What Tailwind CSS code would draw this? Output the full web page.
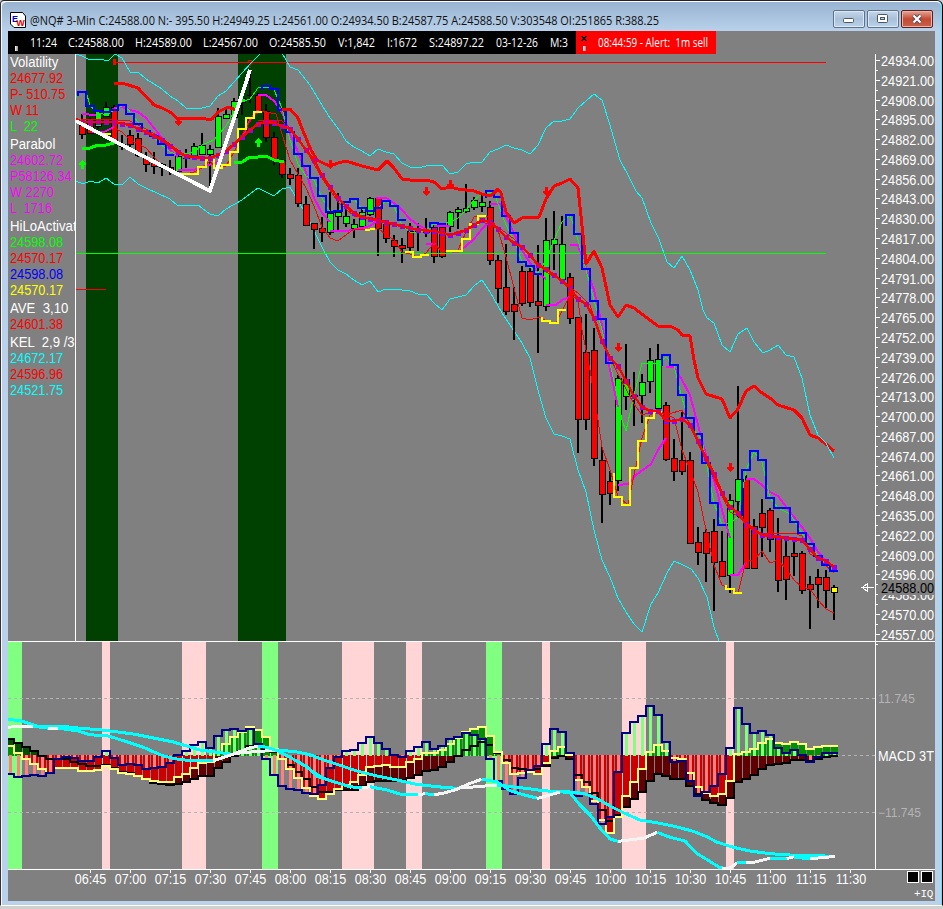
<!DOCTYPE html>
<html lang="en">
<head>
<meta charset="utf-8">
<title>@NQ# 3-Min</title>
<script src="https://cdn.jsdelivr.net/npm/@tailwindcss/browser@4"></script>
</head>
<body class="w-[943px] h-[909px] overflow-hidden bg-[#cfcfcf] font-['Liberation_Sans',Arial,sans-serif]">
<div class="flex flex-col w-[943px] h-[906px] border-t border-[#24202a] rounded-tr-[6px] rounded-tl-[4px] bg-[#b9d1ea] border-r border-r-black border-l border-l-[#3a3036] border-b border-b-white shadow-[inset_-1px_0_0_#5fe0f5,inset_1px_1px_0_#f4f8fc]">
  <header class="flex items-center h-[30px] shrink-0 mx-px pl-[8px] pr-[8px] bg-linear-to-b from-[#99b4d1] to-[#b9d1ea] border-t border-white rounded-t-[5px]">
    <svg class="shrink-0 mt-[6px]" width="16" height="16" viewBox="0 0 16 16">
      <path d="M.5 .5H12.5L15.5 4V15.5H4L.5 12Z" fill="#fff" stroke="#000"/>
      <text x="2" y="9.5" font-family="Liberation Sans" font-size="9" font-weight="bold" fill="#0000e0">E</text>
      <text x="6.2" y="13.5" font-family="Liberation Sans" font-size="9" font-weight="bold" fill="#e00000">W</text>
    </svg>
    <div class="w-[700px] ml-[4px] mt-[6px] shrink-0"><span data-w="629" class="inline-block whitespace-pre origin-left text-[12px] leading-[16px] text-[#111] font-['Open_Sans','Noto_Sans',sans-serif]">@NQ# 3-Min C:24588.00 N:- 395.50 H:24949.25 L:24561.00 O:24934.50 B:24587.75 A:24588.50 V:303548 OI:251865 R:388.25</span></div>
    <div class="flex gap-[2px] ml-auto mt-[4px]">
      <div class="flex items-center justify-center w-[32px] h-[18px] rounded-[2px] border border-[#5f7388] bg-linear-to-b from-[#c5d7ea] via-[#a9c0d9] to-[#b9d2ea] shadow-[inset_0_0_0_1px_#dce9f5]"><svg width="12" height="10"><rect x=".5" y="4.5" width="10" height="4" rx="1" fill="#fff" stroke="#4b5668"/></svg></div>
      <div class="flex items-center justify-center w-[32px] h-[18px] rounded-[2px] border border-[#5f7388] bg-linear-to-b from-[#c5d7ea] via-[#a9c0d9] to-[#b9d2ea] shadow-[inset_0_0_0_1px_#dce9f5]"><svg width="12" height="10"><rect x=".5" y=".5" width="10" height="8" rx="1" fill="#fff" stroke="#4b5668"/><rect x="3.5" y="3.5" width="4" height="2" fill="#b9d1ea" stroke="#4b5668"/></svg></div>
      <div class="flex items-center justify-center w-[32px] h-[18px] rounded-[2px] border border-[#5c1f1c] bg-linear-to-b from-[#e3a497] via-[#c4492f] to-[#c9604c] shadow-[inset_0_0_0_1px_#e9b3a8]"><svg width="12" height="10" viewBox="0 0 12 10"><path d="M2.5 1.5L9.5 8.5M9.5 1.5L2.5 8.5" stroke="#4b4a58" stroke-width="4"/><path d="M2.5 1.5L9.5 8.5M9.5 1.5L2.5 8.5" stroke="#fff" stroke-width="2.2"/></svg></div>
    </div>
  </header>

  <main class="flex flex-col w-[927px] h-[870px] ml-[7px] bg-[#808080]">
    <div class="flex h-[23px] shrink-0 text-white text-[12px] leading-[23px] font-['Open_Sans','Noto_Sans',sans-serif]">
      <div id="quote" class="relative flex w-[568px] bg-black pl-[22px]"><i class="absolute left-[7px] top-[15px] w-[3px] h-[5px] bg-linear-to-r from-white to-[#888]"></i></div>
      <div class="relative w-[140px] bg-[#ff0000] pl-[22px]"><svg class="absolute left-[5px] top-[5px]" width="6" height="5" shape-rendering="crispEdges"><path d="M0 0L6 5M6 0L0 5" stroke="#000" stroke-width="1.6"/></svg><i class="absolute left-[7px] top-[15px] w-[3px] h-[5px] bg-linear-to-r from-white to-[#888]"></i><span data-w="110" class="inline-block whitespace-pre origin-left">08:44:59 - Alert:  1m sell</span></div>
    </div>

    <div class="flex h-[587px] shrink-0">
      <aside id="legend" class="w-[68px] shrink-0 overflow-hidden pl-[2px] border-r border-white text-[14px] leading-[16px] whitespace-pre"></aside>
      <svg id="price" class="shrink-0" width="799" height="587" viewBox="76 54 799 587" shape-rendering="crispEdges"></svg>
      <div class="relative w-[60px] shrink-0 border-l border-white text-white text-[14px]">
        <div id="scale" class="flex flex-col -mt-[3px]"></div>
        <div class="absolute left-[2px] top-[526px] w-[57px] h-[15px] bg-[#808080] pl-[3px] leading-[17px] text-black"><span class="inline-block origin-left scale-x-[0.91]">24588.00</span></div>
      </div>
    </div>

    <div class="flex h-[228px] shrink-0 border-t border-white">
      <svg id="macd" class="shrink-0" width="867" height="227" viewBox="8 642 867 227" shape-rendering="crispEdges"></svg>
      <div class="flex flex-col w-[60px] shrink-0 border-l border-white pt-[48px] whitespace-nowrap">
        <div class="h-[57px] pl-[2px] text-[#b4b4b4] text-[12px] leading-[18px] tracking-[0.2px]">11.745</div>
        <div class="h-[57px] pl-[2px] text-white text-[14px] leading-[19px]"><span class="inline-block origin-left scale-x-[0.91]">MACD 3T</span></div>
        <div class="h-[40px] pl-[2px] text-[#b4b4b4] text-[12px] leading-[18px]">−11.745</div>
      </div>
    </div>

    <footer class="flex grow border-t border-white text-white text-[14px]">
      <div id="times" class="flex w-[893px] pl-[63px]"></div>
      <div class="flex flex-col items-end w-[34px] pr-[2px]">
        <div class="flex gap-[2px] mt-px"><i class="w-[12px] h-[12px] bg-black border border-white"></i><i class="w-[12px] h-[12px] bg-black border border-white"></i></div>
        <div class="mt-[5px] text-[11px] leading-[13px] tracking-[-0.3px] font-['Liberation_Mono',monospace]">+IQ</div>
      </div>
    </footer>
  </main>
</div>

<script>
// ---------- text rows ----------
const quote = [['11:24',30,57],['C:24588.00',68,124],['H:24589.00',135,192],['L:24567.00',203,258],['O:24585.50',269,326],['V:1,842',338,375],['I:1672',387,417],['S:24897.22',429,484],['03-12-26',496,538],['M:3',550,568]];
document.getElementById('quote').insertAdjacentHTML('beforeend', quote.map((r, i) =>
  '<div class="shrink-0" style="width:' + ((quote[i + 1] ? quote[i + 1][1] : 576) - r[1]) + 'px"><span data-w="' + (r[2] - r[1]) + '" class="inline-block whitespace-pre origin-left">' + r[0] + '</span></div>').join(''));
// squeeze or stretch each header text to the width of its slot
const fitAll = () => document.querySelectorAll('[data-w]').forEach(el => {
  const own = el.getBoundingClientRect().width / (el.dataset.k || 1);
  const k = el.dataset.w / own;
  el.dataset.k = k;
  el.style.transform = 'scaleX(' + k + ')';
});
fitAll();
addEventListener('load', () => { fitAll(); requestAnimationFrame(fitAll); });
document.fonts.ready.then(fitAll);

const R = '#ff0000', M = '#ff00ff', G = '#00ff00', W = '#ffffff', B = '#0000ff', Y = '#ffff00', C = '#00ffff';
const legend = [['Volatility',W,1],['24677.92',R],['P- 510.75',R],['W 11',R],['L  22',G],['Parabol',W,1],['24602.72',M],['P58126.34',M],['W 2270',M],['L  1716',M],['HiLoActivat',W,1],['24598.08',G],['24570.17',R],['24598.08',B],['24570.17',Y],['AVE  3,10',W,1],['24601.38',R],['KEL  2,9 /3',W,1],['24672.17',C],['24596.96',R],['24521.75',C]];
document.getElementById('legend').innerHTML = legend.map((l, i) =>
  '<div class="' + (l[2] && i ? 'pt-[2px]' : '') + '" style="color:' + l[1] + '"><span class="inline-block origin-left align-top ' + (l[2] ? 'scale-x-[0.94]' : 'scale-x-[0.91]') + '">' + l[0] + '</span></div>').join('');

let sc = '';
for (let v = 24934; v >= 24557; v -= 13)
  sc += '<div class="relative h-[19.79px] pl-[5px] leading-[20px]"><i class="absolute left-0 top-[9px] w-[4px] h-px bg-white"></i><i class="absolute left-0 top-[19px] w-[2px] h-px bg-white"></i><span class="inline-block origin-left scale-x-[0.91]">' + v + '.00</span></div>';
document.getElementById('scale').innerHTML = sc;

let tm = '';
for (let t = 405; t <= 690; t += 15)
  tm += '<div class="relative w-[40px] shrink-0 text-center leading-[19px]"><i class="absolute left-[19px] top-0 w-px h-[3px] bg-white"></i><span class="inline-block scale-x-[0.9]">' + String(Math.floor(t / 60)).padStart(2, '0') + ':' + String(t % 60).padStart(2, '0') + '</span></div>';
document.getElementById('times').innerHTML = tm;

// ---------- drawing helpers ----------
const rect = (x, y, w, h, c) => '<rect x="' + x + '" y="' + y + '" width="' + w + '" height="' + h + '" fill="' + c + '"/>';
const line = (p, c, w) => '<polyline points="' + p + '" fill="none" stroke="' + c + '" stroke-width="' + w + '" stroke-linejoin="round"/>';
// stepped path: one level per 8px cell, optional lead-in level
const steps = (x, ys, y0) => (y0 ? x + ',' + y0 + ' ' : '') + ys.map((y, i) => (x + i * 8) + ',' + y + ' ' + (x + i * 8 + 8) + ',' + y).join(' ');

// ---------- price panel ----------
// high, low, body top, body bottom, colour
const bars = [
[114,139,125,134,'r'],[118,133,123,133,'r'],[110,129,112,126,'g'],[102,117,107,116,'g'],[105,143,107,142,'r'],[135,150,144,146,'r'],[130,147,135,144,'r'],[133,157,138,155,'r'],[152,172,158,164,'r'],[152,174,161,166,'r'],
[163,176,164,167,'r'],[160,175,167,170,'r'],[150,172,156,171,'g'],[149,168,158,159,'d'],[143,158,146,155,'g'],[133,155,145,154,'g'],[145,190,149,154,'g'],[108,147,116,147,'g'],[107,119,114,118,'g'],[98,121,101,117,'g'],
[94,115,98,102,'g'],[70,103,95,96,'d'],[93,111,95,112,'r'],[104,142,111,137,'r'],[132,165,137,159,'r'],[159,178,160,174,'r'],[168,185,174,178,'r'],[168,207,175,203,'r'],[196,224,204,225,'r'],[223,249,223,229,'r'],
[217,242,228,232,'r'],[192,235,213,232,'g'],[193,230,212,216,'g'],[205,227,216,223,'g'],[219,238,224,228,'g'],[208,226,212,226,'g'],[197,216,198,214,'g'],[197,256,198,228,'r'],[223,243,224,238,'r'],[235,257,240,246,'r'],
[238,263,245,248,'r'],[223,252,231,247,'r'],[223,251,231,232,'d'],[218,237,231,233,'d'],[225,263,227,256,'r'],[224,258,227,256,'r'],[211,232,212,226,'g'],[207,229,209,212,'g'],[184,213,208,211,'g'],[197,210,200,207,'g'],
[193,212,202,206,'g'],[201,265,207,260,'r'],[255,303,260,288,'r'],[244,315,287,311,'r'],[287,340,304,311,'r'],[266,306,271,303,'r'],[268,307,271,302,'r'],[245,353,301,305,'r'],[218,311,240,306,'g'],[211,270,239,244,'g'],
[216,280,244,279,'g'],[273,324,277,318,'r'],[317,453,317,419,'r'],[314,430,352,419,'r'],[328,466,350,458,'r'],[447,523,460,494,'r'],[471,505,481,493,'r'],[375,491,378,480,'g'],[344,410,379,396,'g'],[372,426,395,397,'d'],
[374,423,382,395,'g'],[348,393,360,381,'g'],[344,409,359,408,'g'],[402,461,405,459,'r'],[439,481,458,471,'r'],[412,475,460,471,'r'],[452,544,460,543,'r'],[527,565,542,552,'r'],[529,582,532,553,'r'],[519,611,531,562,'r'],
[531,577,561,576,'r'],[494,593,500,575,'g'],[386,518,479,501,'g'],[475,568,479,568,'r'],[519,568,526,568,'r'],[499,557,513,527,'r'],[508,552,510,539,'r'],[518,592,538,580,'r'],[539,600,556,579,'r'],[542,576,553,556,'r'],
[551,594,553,590,'r'],[576,629,584,589,'r'],[569,608,577,584,'r'],[570,608,577,590,'r'],[585,620,587,592,'y']];
const tone = {r: R, g: G, y: Y};
let s = rect(76,54,799,587,'#808080') + rect(86,54,32,587,'#004000') + rect(238,54,48,587,'#004000');
s += rect(114,62,712,1,R) + rect(113,59,3,6,R) + rect(76,289,30,1,R);
s += '<text x="246.500" y="68" font-family="Liberation Sans" font-size="11" fill="#f00">?</text>';
// volatility bands
s += line('76,54 82,56 86,58 90,60 96,59 104,60 109,60 115,54 122,58 130,72 138,72 146,79 162,89 170,96 178,101 186,108 194,109 202,108 210,106 218,96 226,91 234,82 242,73 252,62 261,53', C, 1);
s += line('282,53 290,67 298,70 310,85 320,102 330,118 340,131 346,141 354,147 362,151 370,156 378,149 386,152 394,154 402,163 410,167 418,168 426,166 442,165 450,174 458,172 466,164 474,162 482,162 490,152 498,149 506,145 514,148 522,150 530,154 538,145 546,128 554,121 562,121 570,119 578,108 586,101 594,94 602,100 610,125 620,160 628,175 636,191 642,198 651,223 659,239 667,262 674,268 682,256 690,270 698,290 703,310 707,318 714,323 722,345 730,352 738,334 747,328 754,342 763,353 770,350 778,345 786,355 794,357 802,378 810,415 818,435 826,443 834,458', C, 1);
s += line('76,181 83,184 90,181 98,183 106,178 114,184 122,185 130,177 138,184 146,188 170,199 178,206 198,205 210,214 218,216 226,209 242,200 258,188 266,192 274,196 282,189 290,187 298,201 306,214 322,247 330,262 338,270 346,274 354,280 362,285 370,281 378,292 386,289 402,290 410,291 418,294 426,294 434,303 442,310 450,299 466,295 474,286 482,280 490,292 502,313 512,328 522,343 530,358 538,390 546,418 554,434 562,436 570,439 578,470 586,492 594,530 602,560 610,577 618,598 626,612 634,624 642,632 651,604 658,593 667,573 674,561 683,565 691,569 698,578 707,597 714,627 719,641', C, 1);
bars.forEach((b, i) => {
  const c = 82 + i * 8;
  s += rect(c - 1, b[0], 2, b[1] - b[0], '#000');
  if (b[4] === 'd') s += rect(c - 3, b[2], 7, b[3] - b[2], '#000');
  else s += rect(c - 3, b[2], 7, b[3] - b[2] + 1, '#000') + rect(c - 2, b[2] + 1, 5, Math.max(1, b[3] - b[2] - 1), tone[b[4]]);
});
s += rect(76,253,750,1,G);
// parabolic
['82,114 96,115','92,132 104,132 114,127','114,108 122,107 130,110 138,112 146,118 154,128 162,138 170,150 178,157','178,170 194,170 202,167 218,162 226,152 234,145 242,137 250,120 258,110','258,95 266,95 274,101 282,112 290,134 298,152 306,172 314,198 322,213 330,222','330,231 346,231 362,228 370,226 378,220','376,198 386,198 394,203 402,210 410,219 418,225 426,229','426,244 436,244','434,226 450,226','446,251 458,252 466,246 474,239 482,229 490,221','490,204 500,204 510,225 522,250 530,263 538,273 546,279','546,305 556,305 562,300 570,297','570,245 578,245 586,268 594,290 602,325 610,370 618,407','618,485 628,484 636,475 651,464 658,450 666,438','666,367 674,367 682,380 690,395 698,425 706,455 714,480 722,510 730,538','730,575 738,575 746,563','746,479 754,479 762,485 770,492 778,496 790,512 802,527 810,538 818,552 826,561 836,568'].forEach(p => s += line(p, M, 2));
// activator
s += line('76,97 79,93 86,92 90,105 96,112 106,115 118,108 124,105 132,114 140,125 148,131 160,144 170,152 178,155 194,152 202,145 214,140 226,126 234,112 242,102 250,99 258,88 266,87 274,90 282,108 290,140 298,164 306,176 314,180 322,198 330,212 338,211 346,203 354,199 362,209 370,211 378,208 386,201 394,206 402,225 410,232 418,233 426,230 434,224 442,224 450,222 458,218 466,210 474,200 482,194 488,192 494,193 506,225 514,240 522,262 530,267 538,273 546,260 554,240 562,222 570,215 578,240 590,285 602,330 610,363 618,400 622,420 626,431 634,395 642,363 658,364 666,357 674,366 682,398 690,425 702,440 714,503 722,525 730,523 738,517 746,470 754,452 762,462 770,498 778,508 790,514 802,533 818,556 834,571', G, 1);
s += line('114,128 122,132 130,140 146,148 154,157 162,165 178,174 186,174 194,172 202,168 210,161 216,168 226,166 234,152 242,135 254,115 262,111 276,114 282,134 290,160 306,188 314,206 322,227 330,238 338,241 346,235 354,229 370,229 378,228 386,235 394,240 402,252 410,254 418,257 426,253 434,243 442,252 450,250 458,250 466,232 474,217 482,215 490,217 498,230 506,257 514,288 522,318 530,320 540,317 546,321 556,323 562,311 570,295 578,300 582,330 590,370 598,420 602,447 610,470 618,496 628,505 634,475 642,438 650,415 658,411 674,418 682,450 690,470 698,492 706,530 714,565 722,585 738,593 746,561 754,560 762,551 770,563 778,560 786,569 794,580 802,587 810,589 818,600 826,609 834,613', R, 1);
s += line('76,121 86,119 114,120 130,121 146,129 162,138 178,150', R, 1);
s += line('258,121 266,120 282,121 290,128 306,150 322,178 338,202 354,216 386,223 410,229 434,231 450,236 466,231 482,222 498,227 514,239 530,256 546,272 562,281 578,293 590,305 602,340 618,374 634,404 642,415 654,411 666,415 682,410 690,424 706,462 730,512 738,516 746,522 762,534 794,533 802,536 810,554 820,560 834,573', R, 1);
// step channels
[steps(78,[92,106,111,112,110,105,114,124,131,136,144,155],96), steps(262,[86,89,110,132,154,166,178,196,212,211,202,199,208,211,208,201,206,220],90), steps(430,[223,224],228), steps(486,[191,197,216,233,262,266,274],198), steps(566,[215,234,269,301,319,363],226), steps(662,[355,365,395,418,434,463,503,525],366), steps(742,[470,451,460,498,508,508,522,533,544,556,565,571],516)].forEach(p => s += line(p, B, 2));
['100,134 111,134', steps(174,[174,174,174,167,160,168,165,152,129,118,112]), '365,230 375,229', steps(405,[252,257,255]), steps(446,[251,251,239,224,216]), steps(542,[321,323,310],317), steps(614,[497,505,468,441,418,412],473), steps(726,[589,593],585)].forEach(p => s += line(p, Y, 2));
// trailing stop
s += line('114,83 122,83 138,88 154,105 162,108 170,112 178,119 202,118 210,120 212,119 218,112 228,107 236,110', R, 3);
s += line('282,109 290,109 298,118 303,131 311,150 317,160 325,164 330,166 338,163 346,161 362,166 378,170 387,161 394,168 402,179 410,180 426,180 434,182 442,189 450,187 458,189 474,191 482,194 490,196 494,193 498,189 501,193 506,212 514,223 522,218 539,217 546,199 554,186 562,183 570,179 578,188 583,235 586,264 594,251 602,268 610,305 618,317 626,305 634,308 658,326 670,326 678,330 682,335 690,336 694,360 698,378 706,394 722,399 730,418 738,409 746,391 754,386 762,393 770,398 778,405 794,410 802,418 810,435 818,438 826,444 834,451', R, 3);
s += line('818,435 826,443 834,458', C, 1);
s += line('82,148 90,148 98,145 106,145 118,142', G, 3) + line('234,162 242,162 250,157 258,157 266,156 274,160 284,162', G, 3);
// centre average with markers
const avg = '76,119 82,122 98,122 114,122 130,125 146,132 162,140 178,152 186,156 202,158 210,158 218,155 226,151 234,144 242,137 250,130 258,124 266,122 274,123 282,126 290,129 298,139 306,150 314,160 322,175 330,187 338,198 346,206 354,213 362,217 378,220 402,226 418,230 434,231 450,235 466,230 482,220 490,222 498,229 506,237 514,243 522,247 530,255 538,265 546,269 554,275 562,281 570,288 578,299 586,304 594,318 602,341 610,358 618,366 626,381 634,396 642,407 650,411 658,411 666,421 674,421 682,419 690,425 698,441 706,458 714,474 722,493 730,507 738,513 746,524 754,530 762,535 778,537 802,540 810,549 818,558 826,561 834,567';
const pts = avg.split(' ').map(p => p.split(',').map(Number));
for (let c = 82; c <= 834; c += 8) {
  const i = pts.findIndex(p => p[0] >= c), b = pts[i], a = pts[i - 1] || b;
  const y = a === b ? b[1] : a[1] + (b[1] - a[1]) * (c - a[0]) / (b[0] - a[0]);
  s += rect(c - 2, Math.round(y) - 2, 5, 5, '#9000ff');
}
s += line(avg, R, 2.4);
s += line('76,121 210,191 250,70', W, 3.8);
const arrow = (x, y, up, c) => '<path transform="translate(' + x + ' ' + y + ') scale(1 ' + (up ? -1 : 1) + ')" d="M-1 -4H2V0H4V1L.5 5L-3 1V0H-1Z" fill="' + c + '"/>';
[[82,165],[258,143]].forEach(a => s += arrow(a[0], a[1], true, G));
[[178,121],[330,164],[426,191],[450,184],[546,191],[618,347],[730,467]].forEach(a => s += arrow(a[0], a[1], false, R));
s += '<path d="M874 587.500H862M867 584L862 587.500L867 591Z" fill="#808080" stroke="#fff"/>';
document.getElementById('price').innerHTML = s;

// ---------- MACD panel ----------
// levels are thirds of a pixel below y=640, one value per 8px cell, first cell centred on x=10
const slow = [298,308,321,333,348,358,358,358,365,372,378,378,375,385,395,400,408,418,428,432,434,432,426,416,408,407,385,365,348,333,318,318,330,337,357,375,396,417,440,456,455,450,450,450,438,426,423,423,423,420,414,404,393,390,381,365,348,330,318,305,314,338,361,384,386,392,388,378,354,347,356,404,427,459,510,543,525,501,477,456,423,402,408,416,416,438,462,480,490,495,474,426,416,405,387,375,372,369,359,360,362,357,352,347];
const mid = [318,338,356,372,386,400,384,384,384,393,393,390,378,387,398,402,408,417,422,427,425,411,402,384,370,366,338,312,290,276,261,270,291,327,357,387,414,444,468,477,462,447,435,425,405,381,377,375,380,380,366,356,340,338,330,312,295,275,267,261,288,336,369,402,399,396,402,369,333,321,345,420,440,483,540,579,531,468,426,387,336,315,333,355,358,398,441,458,468,462,423,342,336,327,309,297,309,313,305,312,327,321,318,318];
const fast = [402,411,407,405,408,400,357,350,354,363,363,350,333,354,374,372,374,386,384,382,369,345,333,315,306,324,288,269,266,272,267,312,357,405,438,447,450,459,462,435,384,350,332,329,308,290,308,326,345,350,333,320,306,326,318,297,291,278,285,297,357,423,447,462,414,390,378,312,266,276,339,468,462,491,552,531,396,279,245,228,198,225,306,366,363,423,468,456,438,402,324,203,251,279,272,285,324,339,330,345,366,350,339,339];
const zy = 755, py = v => Math.round(640 + v / 3);
let m = rect(8,642,867,227,'#808080');
[[8,14,'g'],[102,8],[182,24],[262,16,'g'],[342,32],[406,16],[486,16,'g'],[542,8],[622,24],[726,8]].forEach(b => m += rect(b[0],642,b[1],227,b[2] ? '#80ff80' : '#ffd5d5'));
[698,755,812].forEach(y => m += '<path d="M8 ' + (y + .5) + 'H' + 875 + '" stroke="#b4b4b4" stroke-dasharray="3 3"/>');
const col = (x, v, w, down, up) => { const y = py(v); return y > zy ? rect(x, zy, w, y - zy, down) : rect(x, y, w, zy - y + 1, up); };
slow.forEach((v, i) => m += col(7 + i * 8, v, 7, '#600000', '#005000'));
mid.forEach((v, i) => m += col(7 + i * 8, v, 7, '#cc0000', '#009000'));
fast.forEach((v, i) => m += col(9 + i * 8, v, 3, '#ff8080', '#80ff80'));
[[slow,'#000000'],[mid,'#ffff80'],[fast,'#000080']].forEach(g => m += line(steps(6, g[0].map(py)), g[1], 2));
const cv = (ox, p, c) => line(p.split(' ').map(t => { const k = t.split(',').map(Number); return (ox + k[0] / 3).toFixed(1) + ',' + (640 + k[1] / 3).toFixed(1); }).join(' '), c, 3);
const L = '#f4f4f4';
m += cv(0,'24,238 65,243 110,258 180,258 240,265 300,269 400,282 460,294 520,306 560,318 600,330 660,338 690,341',C);
m += cv(0,'24,262 60,259 100,259',L) + cv(0,'100,259 150,265',C) + cv(0,'145,265 175,265',L);
m += cv(0,'175,265 230,272 270,284 325,288 380,305 430,322 490,348 540,359 590,362 640,362',C);
m += cv(0,'640,362 700,342 745,325 775,318',L) + cv(0,'700,341 740,337 780,334 830,331',L);
m += cv(0,'775,318 800,322 832,332 870,352 920,380 950,408 963,414',C) + cv(0,'825,331 880,334 920,342 963,356',C);
m += cv(310,'30,356 60,366 140,393 200,408 260,420 320,433 380,440 440,445',C) + cv(310,'440,445 490,441 560,435',L);
m += cv(310,'560,435 640,444 700,452 760,456 780,456',C);
m += cv(310,'0,390 40,415 80,428 120,440 155,444',C) + cv(310,'155,444 180,440',L) + cv(310,'180,440 230,450 270,462 325,464',C) + cv(310,'325,464 345,461',L) + cv(310,'345,461 372,464',C) + cv(310,'372,464 400,460 440,448 480,430 515,418',L);
m += cv(310,'0,344 30,356',C) + cv(310,'515,418 560,425 600,452 640,464 680,474',C) + cv(310,'680,476 750,456',L) + cv(310,'755,454 780,456',C);
m += cv(570,'0,456 40,460 80,475 120,498 160,518 210,540 260,548 310,558 370,574 410,590 440,606 490,622 540,633 600,641 660,645 730,646 780,649',C);
m += cv(570,'0,458 30,495 60,525 90,564 120,597 145,604',C) + cv(570,'145,604 220,595 262,577',L) + cv(570,'262,577 300,592 345,603 380,640 450,683 458,684',C);
m += cv(570,'455,685 480,684 502,668',L) + cv(570,'502,667 527,667',C) + cv(570,'527,667 555,666 600,655',L) + cv(570,'600,655 650,656',C) + cv(570,'650,656 672,650',L) + cv(570,'672,652 720,656',C) + cv(570,'720,656 770,652 796,649',L);
document.getElementById('macd').innerHTML = m;
</script>
</body>
</html>
